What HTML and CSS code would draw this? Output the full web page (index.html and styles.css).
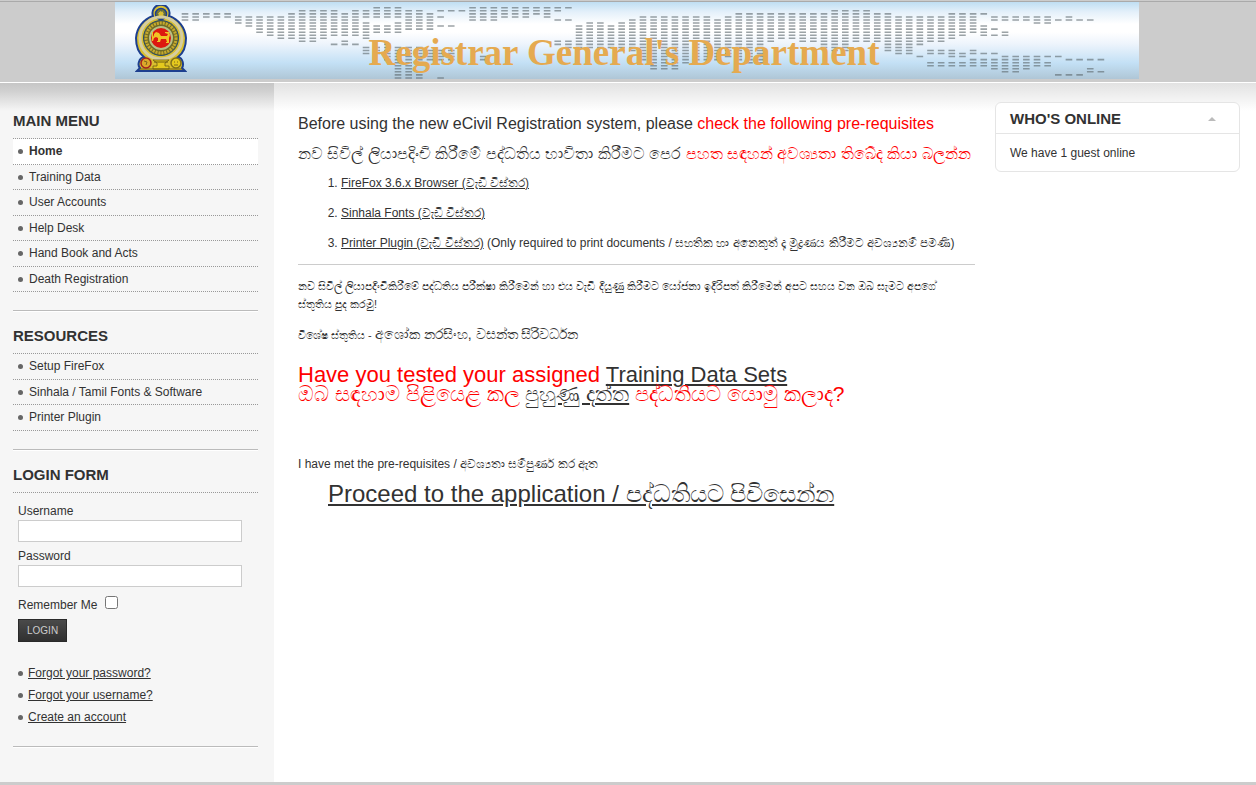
FILE: index.html
```html
<!DOCTYPE html>
<html lang="en">
<head>
<meta charset="utf-8">
<title>Registrar General's Department</title>
<link rel="stylesheet" href="styles.css">
</head>
<body>
<header class="header">
  <div class="banner">
    <svg class="map" viewBox="0 0 1024 77" aria-hidden="true">
      <path transform="translate(70 5) scale(10.65 3.05)" fill="none" stroke="#606a70" stroke-opacity=".62" stroke-width=".62" stroke-dasharray=".5 .5" d="M0 2v3M1 2v3M2 2v2M3 2v2M4 2v2M5 3v3M6 3v4M7 3v6M8 3v7M9 3v8M10 2v9M11 1v11M12 1v11M13 1v10M14 1v9M14 12v1M15 2v8M15 11v2M16 1v9M16 12v1M17 1v3M17 5v6M17 13v3M18 0v4M18 6v3M18 13v3M19 0v4M19 6v3M19 12v6M20 0v4M20 5v4M20 13v11M21 1v7M21 13v11M22 1v7M22 13v6M22 21v3M23 2v6M23 14v4M24 1v1M24 3v1M24 6v1M24 14v4M24 23v1M25 1v1M25 6v1M25 14v4M26 1v1M27 0v5M28 0v5M28 16v2M29 0v5M30 0v4M31 0v4M32 0v4M33 0v3M34 0v4M35 0v2M35 4v1M35 11v2M36 0v1M36 4v1M36 11v3M37 6v8M38 5v9M39 5v9M40 6v8M41 5v10M42 4v11M43 3v15M44 3v18M45 3v18M46 3v18M47 3v16M48 3v15M49 3v15M50 4v14M51 3v14M52 2v16M53 2v17M54 2v17M55 2v10M56 2v9M57 2v9M58 2v10M59 2v10M60 2v12M61 1v14M62 1v14M63 1v11M64 1v11M65 2v10M66 2v13M67 3v13M68 3v13M69 3v10M69 16v1M70 3v9M70 14v2M70 18v2M71 3v9M71 14v2M71 18v2M72 2v9M72 14v3M72 18v2M73 2v8M73 15v2M73 18v2M74 2v7M74 14v2M74 17v3M75 2v1M75 6v4M75 15v1M75 17v3M76 3v2M76 7v1M76 9v1M76 15v1M76 17v4M77 3v2M77 8v2M77 16v1M77 17v5M78 3v2M78 16v6M79 3v2M79 16v5M80 3v3M80 16v4M81 3v3M81 16v1M81 18v2M82 4v1M82 16v1M82 22v1M83 3v2M83 17v1M83 22v1M84 4v1M84 17v1M84 22v1M85 4v1M85 17v1M85 20v2M86 17v1M86 21v1"/>
    </svg>
    <svg class="crest" viewBox="0 0 52 68" role="img" aria-label="Emblem of Sri Lanka">
      <g stroke="#1d3f8f">
        <path fill="#d9bf2f" stroke-width="2" d="M9 52C2 47 1 38 1 33A25 25 0 0 1 18 11A8.500 8.500 0 1 1 34 11A25 25 0 0 1 51 33C51 38 50 47 43 52C48 53 49 60 47 63L50 66H2L5 63C2 60 4 53 9 52Z"/>
        <circle cx="26" cy="9" r="5.500" fill="#7a7a28" stroke-width="1.500"/>
        <circle cx="26" cy="9" r="3" fill="#d9bf2f" stroke-dasharray="1 1"/>
      </g>
      <circle cx="26" cy="33" r="21" fill="none" stroke="#d5cda0" stroke-width="3"/>
      <circle cx="26" cy="33" r="17.500" fill="#6f6b26" stroke="#264a70"/>
      <circle cx="26" cy="33" r="15" fill="none" stroke="#c6a92d" stroke-width="3" stroke-dasharray="2 1"/>
      <circle cx="26" cy="33" r="11" fill="#dd1710" stroke="#b9bf84" stroke-width="2"/>
      <path fill="#f0c325" d="M19 29l2-2 3 1 2 3h6l1-2-3-1v-1h4l1 3-1 3v5h-3v-1h1l-1-3h-5l-1 3h-3v-1h1v-3l-2-1-2 1-1 3h-1v-4h1l1-2zM17 27h1v6h-1z"/>
      <path fill="#e5c91d" stroke="#6c5a12" stroke-width=".8" d="M18 55h16l-4 3v3h4v3H18v-3h4v-3z"/>
      <path stroke="#6c5a12" d="M19 57h14M5 64h42"/>
      <circle cx="11" cy="58" r="5" fill="#dca82a" stroke="#a32020" stroke-width="1.500"/>
      <circle cx="41" cy="58" r="5" fill="#e5c91d" stroke="#80701a" stroke-width="1.500"/>
      <path fill="none" stroke="#7f661c" d="M9 56l3 1-1 3M39 57h1M42 57h1M39 60h4"/>
    </svg>
    <h1 class="title">Registrar General's Department</h1>
  </div>
</header>

<div class="page">
  <aside class="sidebar">
    <section class="module">
      <h2>MAIN MENU</h2>
      <ul class="menu">
        <li class="active"><a href="#">Home</a></li>
        <li><a href="#">Training Data</a></li>
        <li><a href="#">User Accounts</a></li>
        <li><a href="#">Help Desk</a></li>
        <li><a href="#">Hand Book and Acts</a></li>
        <li><a href="#">Death Registration</a></li>
      </ul>
    </section>
    <section class="module">
      <h2>RESOURCES</h2>
      <ul class="menu">
        <li><a href="#">Setup FireFox</a></li>
        <li><a href="#">Sinhala / Tamil Fonts &amp; Software</a></li>
        <li><a href="#">Printer Plugin</a></li>
      </ul>
    </section>
    <section class="module">
      <h2>LOGIN FORM</h2>
      <form class="login">
        <label for="user">Username</label>
        <input class="field" type="text" id="user">
        <label for="pass">Password</label>
        <input class="field" type="password" id="pass">
        <div class="remember">
          <label for="remember">Remember Me</label>
          <input type="checkbox" id="remember">
        </div>
        <button type="button">LOGIN</button>
        <ul class="help">
          <li><a href="#">Forgot your password?</a></li>
          <li><a href="#">Forgot your username?</a></li>
          <li><a href="#">Create an account</a></li>
        </ul>
      </form>
    </section>
  </aside>

  <main class="content">
    <p class="lead">Before using the new eCivil Registration system, please <span class="red">check the following pre-requisites</span></p>
    <p class="lead" lang="si">නව සිවිල් ලියාපදිංචි කිරීමේ පද්ධතිය භාවිතා කිරීමට පෙර <span class="red">පහත සඳහන් අවශ්‍යතා තිබේද කියා බලන්න</span></p>
    <ol class="steps">
      <li><a href="#">FireFox 3.6.x Browser (වැඩි විස්තර)</a></li>
      <li><a href="#">Sinhala Fonts (වැඩි විස්තර)</a></li>
      <li><a href="#">Printer Plugin (වැඩි විස්තර)</a> (Only required to print documents / සහතික හා අනෙකුත් දෑ මුද්‍රණය කිරීමට අවශ්‍යනම් පමණි)</li>
    </ol>
    <hr>
    <p class="note" lang="si">නව සිවිල් ලියාපදිංචිකිරීමේ පද්ධතිය පරීක්ෂා කිරීමෙන් හා එය වැඩි දියුණු කිරීමට යෝජනා ඉදිරිපත් කිරීමෙන් අපට සහය වන ඔබ සැමට අපගේ<br>ස්තුතිය පුද කරමු!</p>
    <p class="note" lang="si">විශේෂ ස්තුතිය - <span class="names">අශෝක නරසිංහ, වසන්ත සිරිවර්ධන</span></p>
    <p class="question">Have you tested your assigned <a href="#">Training Data Sets</a></p>
    <p class="question translated" lang="si">ඔබ සඳහාම පිළියෙළ කල <a href="#">පුහුණු දත්ත</a> පද්ධතියට යොමු කලාද?</p>
    <p class="met">I have met the pre-requisites / අවශ්‍යතා සම්පුර්ණ කර ඇත</p>
    <p class="proceed"><a href="#">Proceed to the application / පද්ධතියට පිවිසෙන්න</a></p>
  </main>

  <aside class="right">
    <section class="box">
      <h2>WHO'S ONLINE <svg class="arrow" viewBox="0 0 8 4" aria-hidden="true"><path fill="#bbb" d="M4 0l4 4H0z"/></svg></h2>
      <p>We have 1 guest online</p>
    </section>
  </aside>
</div>
</body>
</html>
```
FILE: styles.css
```css
* { box-sizing: border-box; }
body {
  margin: 0;
  min-height: 100vh;
  display: flex;
  flex-direction: column;
  font: 12px/18px "Liberation Sans", Arial, sans-serif;
  color: #323232;
  background: #fff;
  border-bottom: 3px solid #ccc;
}
a { color: inherit; }
h1, h2, p, ul, ol { margin: 0; padding: 0; font-size: inherit; }
ul { list-style: none; }

.header {
  background: linear-gradient(#ccc 0 1px, #aaa 1px 2px, #ccc 2px);
  padding: 2px 2px 3px 0;
}
.banner {
  display: grid;
  width: 1024px;
  max-width: 100%;
  height: 77px;
  margin: 0 auto;
  background: linear-gradient(#bfdef3 0, #e4f0fa 10px, #fff 22px, #fff 30px, #edf4fc 42px, #c3e0f5 61px, #afc6d6 77px);
}
.banner > * { grid-area: 1 / 1; }
.map { width: 100%; height: 77px; }
.crest { width: 52px; height: 68px; margin: 3px 0 0 20px; }
.title {
  align-self: center;
  padding: 24px 6px 0 0;
  text-align: center;
  font: bold 37px/46px "Liberation Serif", serif;
  color: #e5aa50;
}

.page {
  flex: 1;
  display: grid;
  grid-template-columns: 274px minmax(0, 1fr) 261px;
  border-top: 1px solid #fff;
}
.sidebar {
  padding: 28px 16px 0 13px;
  background: linear-gradient(#c6c6c6, #d0d0d0 8px, #f6f6f6 28px);
}
.module {
  padding-bottom: 18px;
  margin-bottom: 15px;
  border-bottom: 1px solid #bbb;
  box-shadow: 0 1px #fff;
}
h2 { font-size: 15px; line-height: 20px; font-weight: bold; }
.module h2 { padding-bottom: 7px; border-bottom: 1px dotted #999; }
.menu li {
  padding-left: 5px;
  border-bottom: 1px dotted #999;
  line-height: 25px;
}
.menu li:nth-child(even) { line-height: 24px; }
.menu a { text-decoration: none; }
.menu .active { background: #fff; font-weight: bold; }
.menu li, .help li { display: flex; align-items: center; }
.menu li::before, .help li::before {
  content: "";
  width: 5px;
  height: 5px;
  margin-right: 6px;
  border-radius: 50%;
  background: #666;
}
.login { display: flex; flex-direction: column; align-items: flex-start; padding: 9px 16px 0 5px; }
.field {
  width: 100%;
  height: 22px;
  margin: 0 0 5px;
  border: 1px solid #ccc;
  background: #fff;
}
.remember { display: flex; gap: 8px; padding: 4px 0 5px; }
.remember input { width: 13px; height: 13px; margin: 0; }
.login button {
  height: 23px;
  padding: 0 8px;
  border: 1px solid #2a2a2a;
  background: linear-gradient(#4a4a4a, #303030);
  color: #ccc;
  font: 10px/20px "Liberation Sans", Arial, sans-serif;
}
.help { padding-top: 20px; }
.help li { line-height: 22px; }
.help li::before { margin-right: 5px; }

.content { padding: 32px 20px 20px 24px; background: linear-gradient(#e2e2e2, #fff 28px); }
.right { padding: 19px 16px 0 0; background: linear-gradient(#e2e2e2, #fff 28px); }
.red { color: #f00; }
.lead { font-size: 16px; line-height: 18px; margin-bottom: 12px; }
.steps { padding-left: 43px; margin-top: -1px; }
.steps li { margin-bottom: 12px; }
hr { margin: 0 0 12px; border: 0; border-top: 1px solid #ccc; }
.note { margin-bottom: 12px; font-size: 11px; }
.names { font-size: 14px; }
.question { padding-top: 9px; font-size: 22px; line-height: 19px; color: #f00; }
.question a { color: #323232; }
.translated { padding-top: 0; font-size: 21px; }
.met { padding-top: 52px; }
.proceed { padding: 9px 0 0 30px; font-size: 24px; line-height: 24px; }

.box { border: 1px solid #e5e5e5; border-radius: 6px; background: #fff; }
.box h2 {
  display: flex;
  align-items: center;
  justify-content: space-between;
  padding: 6px 23px 4px 14px;
  border-bottom: 1px solid #e5e5e5;
}
.arrow { width: 8px; height: 4px; }
.box p { padding: 10px 14px 9px; }
```
